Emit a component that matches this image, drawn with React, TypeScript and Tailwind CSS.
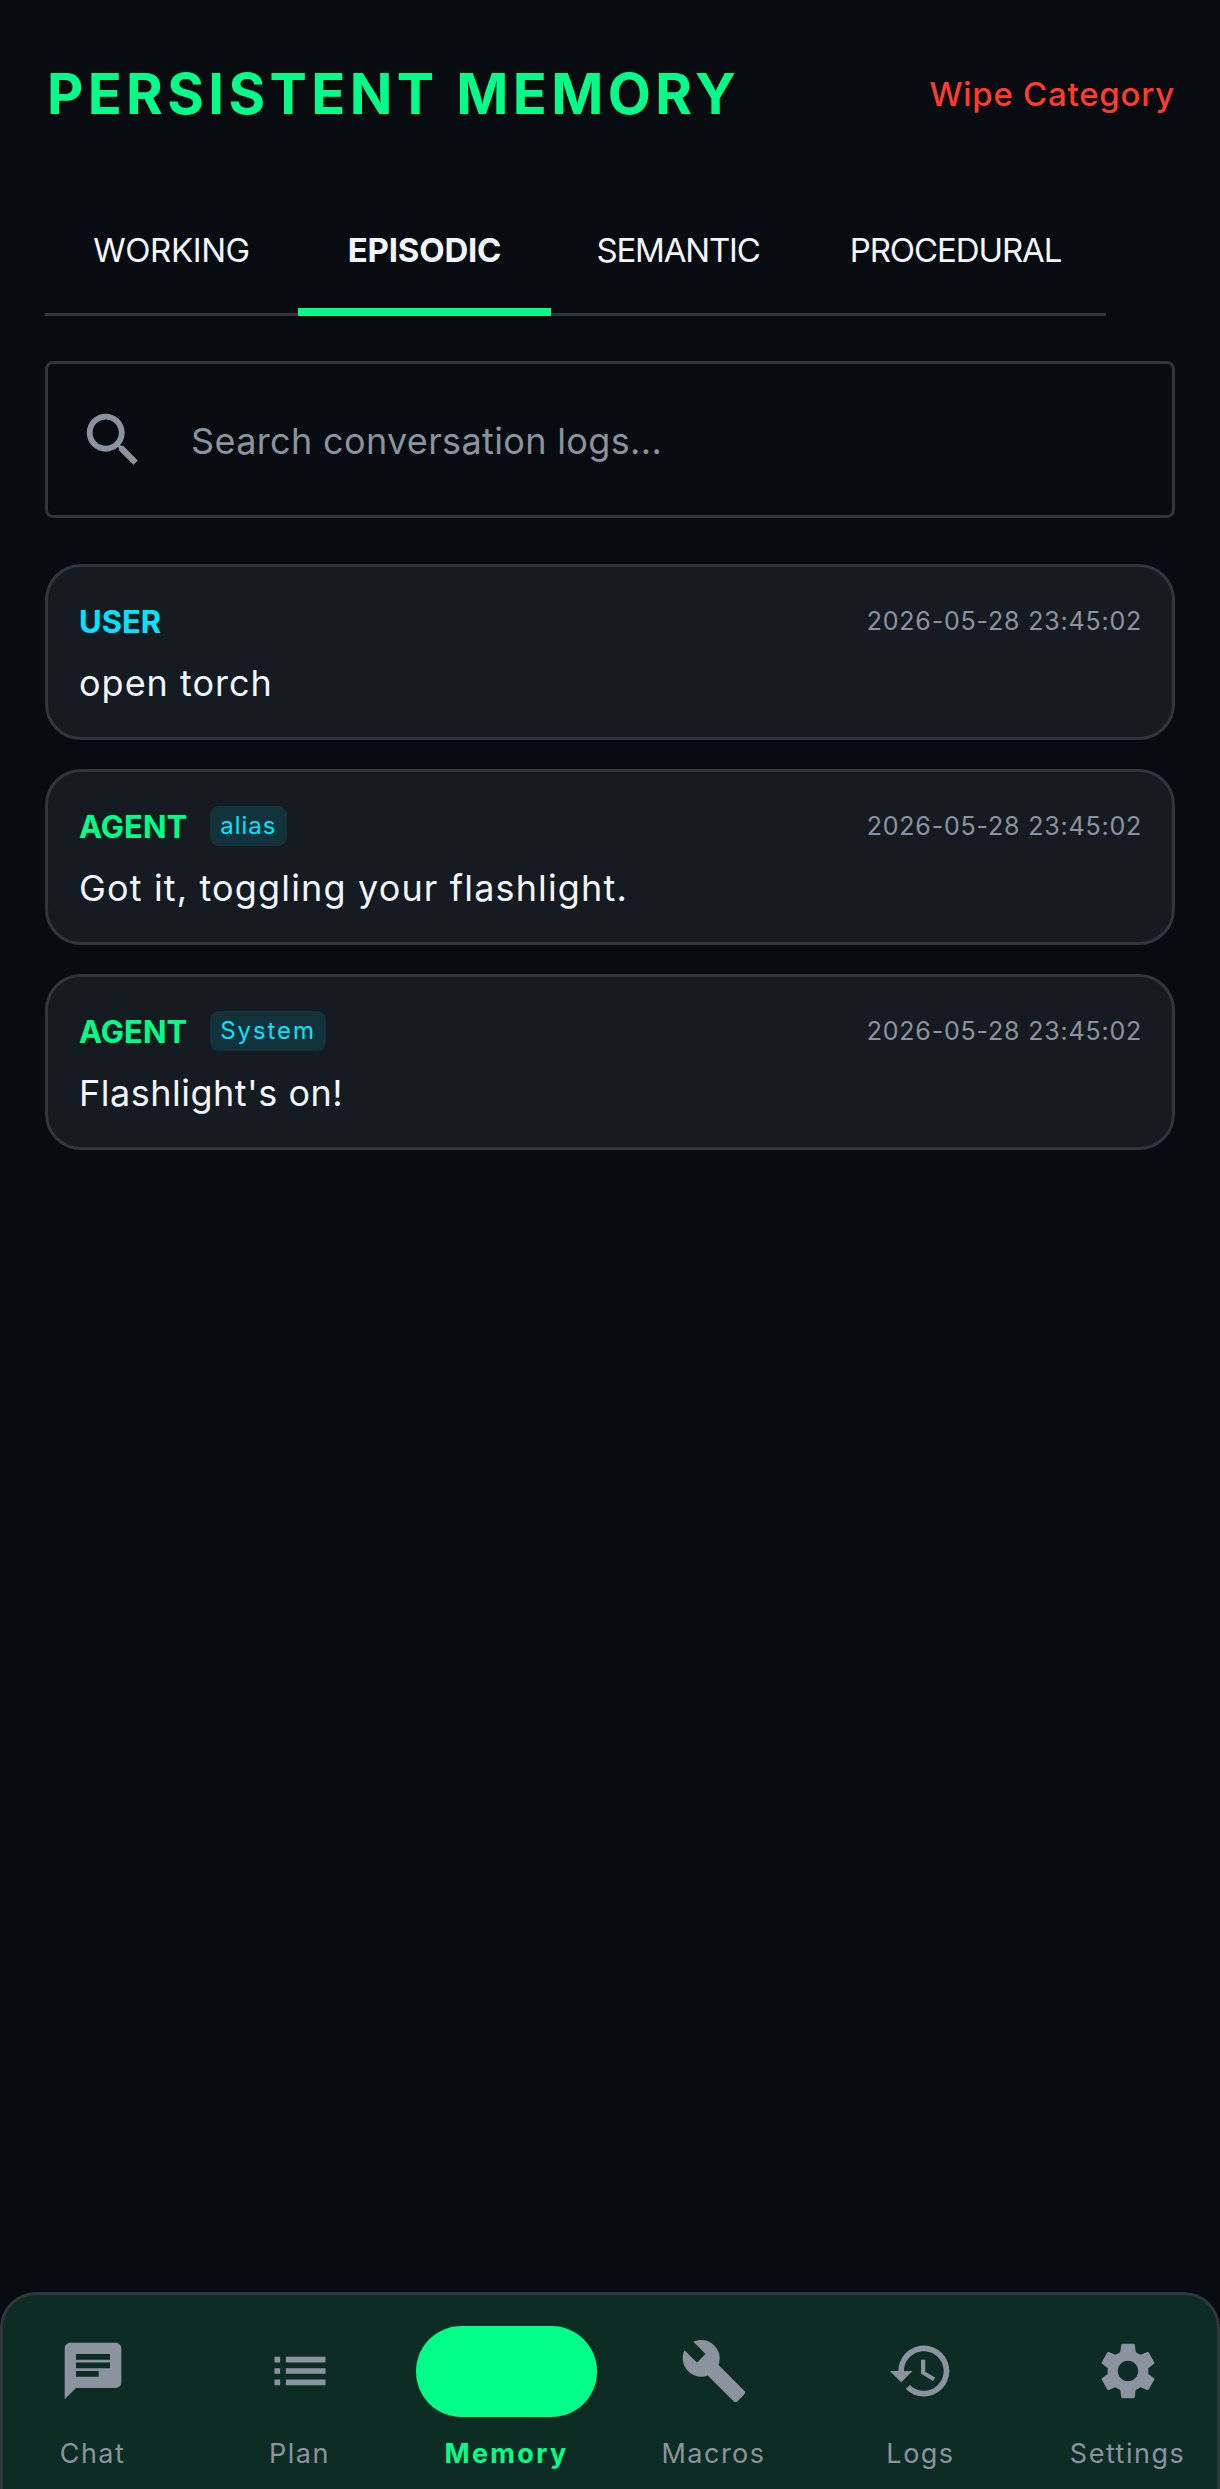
import React from "react";
import { MdChat, MdList, MdBuild, MdHistory, MdSettings, MdSearch } from "react-icons/md";

const font = "font-['Inter','Liberation_Sans',sans-serif]";

const logs = [
  { who: "USER", color: "text-[#00e5ff]", tag: "", tagCls: "", text: "open torch", textCls: "tracking-[1px]" },
  { who: "AGENT", color: "text-[#00ff88]", tag: "alias", tagCls: "tracking-[1px]", text: "Got it, toggling your flashlight.", textCls: "tracking-[1.15px]" },
  { who: "AGENT", color: "text-[#00ff88]", tag: "System", tagCls: "tracking-[1.9px]", text: "Flashlight's on!", textCls: "tracking-[0.5px]" },
];

const tabs = [
  { label: "WORKING", cls: "w-[253px] tracking-[-0.4px]" },
  { label: "EPISODIC", cls: "w-[253px] tracking-[-0.2px]", active: true },
  { label: "SEMANTIC", cls: "w-[254px] tracking-[-1.2px]" },
  { label: "PROCEDURAL", cls: "w-[301px] tracking-[-1.1px]" },
];

const nav = [
  { label: "Chat", Icon: MdChat },
  { label: "Plan", Icon: MdList },
  { label: "Memory", active: true },
  { label: "Macros", Icon: MdBuild },
  { label: "Logs", Icon: MdHistory },
  { label: "Settings", Icon: MdSettings },
];

export default function App() {
  return (
    <div className={`${font} flex h-[2489px] w-[1220px] flex-col overflow-hidden bg-[#080c10] text-[#f0f6fc]`}>
      <main className="flex min-h-0 flex-1 flex-col px-[45px] pt-[64px]">
        <header className="flex items-center justify-between pl-[2px]">
          <h1 className="text-[56px] font-bold leading-[60px] tracking-[4.4px] text-[#00ff88]">PERSISTENT MEMORY</h1>
          <button className="text-[33px] font-medium leading-[40px] tracking-[0.75px] text-[#ff3b30]">Wipe Category</button>
        </header>

        <div className="mt-[60px] flex h-[132px] w-[1061px] border-b-[3px] border-[#30363d]">
          {tabs.map((t) => (
            <div
              key={t.label}
              className={`${t.cls} -mb-[3px] flex items-center justify-center border-b-[8px] pt-[10px] text-[33px] ${
                t.active ? "border-[#00ff88] font-bold" : "border-transparent font-normal"
              }`}
            >
              {t.label}
            </div>
          ))}
        </div>

        <div className="mt-[45px] flex h-[157px] items-center rounded-[8px] border-[3px] border-[#30363d] pl-[30px]">
          <MdSearch className="h-[70px] w-[70px] text-[#8b949e]" />
          <span className="ml-[43px] pt-[2px] text-[36px] tracking-[0.35px] text-[#8b949e]">Search conversation logs...</span>
        </div>

        <div className="mt-[46px] flex flex-col gap-[29px]">
          {logs.map((l, i) => (
            <article key={i} className="flex h-[176px] flex-col rounded-[36px] border-[3px] border-[#30363d] bg-[#161b22] pl-[31px] pr-[30px] pt-[35px]">
              <div className="flex h-[40px] items-center justify-between">
                <div className="flex items-center gap-[23px]">
                  <span className={`text-[31px] font-bold leading-[40px] ${l.color}`}>{l.who}</span>
                  {l.tag && (
                    <span className={`-mt-[2px] flex h-[40px] items-center rounded-[9px] bg-[#00e5ff]/12 px-[10px] text-[24px] leading-none text-[#00e5ff] ${l.tagCls}`}>
                      {l.tag}
                    </span>
                  )}
                </div>
                <span className="text-[25px] tracking-[0.8px] text-[#8b949e]">2026-05-28 23:45:02</span>
              </div>
              <p className={`mt-[19px] text-[36px] leading-[44px] ${l.textCls}`}>{l.text}</p>
            </article>
          ))}
        </div>
      </main>

      <nav className="flex h-[197px] shrink-0 justify-center overflow-hidden rounded-t-[36px] border-x-[3px] border-t-[3px] border-[#30363d] bg-[#0c2c24]">
        {nav.map(({ label, Icon, active }) => (
          <div key={label} className="flex w-[207px] shrink-0 flex-col items-center pt-[31px]">
            {active ? (
              <div className="h-[91px] w-[181px] rounded-full bg-[#00ff88]" />
            ) : (
              Icon && (
                <div className="flex h-[91px] items-center justify-center">
                  <Icon className="-mt-[2px] h-[68px] w-[68px] text-[#8b949e]" />
                </div>
              )
            )}
            <span
              className={`mt-[19px] text-[27px] leading-[36px] tracking-[1.5px] ${
                active ? "font-bold tracking-[2.3px] text-[#00ff88]" : "text-[#8b949e]"
              }`}
            >
              {label}
            </span>
          </div>
        ))}
      </nav>
    </div>
  );
}
